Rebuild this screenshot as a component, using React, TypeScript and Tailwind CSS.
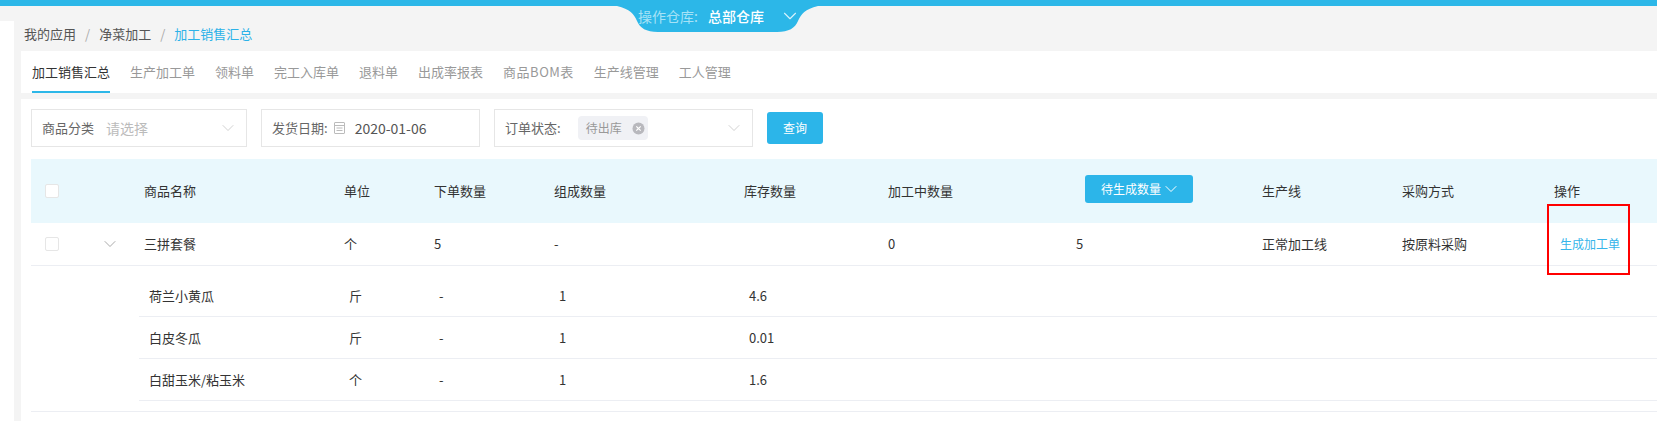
import { ChevronDown } from 'lucide-react';

const tabs = ['生产加工单', '领料单', '完工入库单', '退料单', '出成率报表', '商品BOM表', '生产线管理', '工人管理'];

const rowGrid = 'grid grid-cols-[72px_41px_200px_90px_120px_190px_144px_188px_186px_140px_152px_1fr] items-center';
const subGrid = 'grid grid-cols-[210px_90px_120px_190px_1fr] items-center';

const subRows = [
  { name: '荷兰小黄瓜', unit: '斤', stock: '4.6' },
  { name: '白皮冬瓜', unit: '斤', stock: '0.01' },
  { name: '白甜玉米/粘玉米', unit: '个', stock: '1.6' },
];

const Checkbox = () => (
  <div className="ml-[14px] h-[14px] w-[14px] rounded-[2px] border border-[#e6e6e6] bg-white" />
);

const App = () => {
  return (
    <div className="relative flex h-[421px] w-[1657px] flex-col overflow-hidden bg-[#f4f4f4] font-['Noto_Sans_CJK_SC','Noto_Sans',sans-serif] text-[13px] text-[#333]">
      <div className="h-[6px] bg-[#2cb7e8]" />

      {/* warehouse switcher hangs off the top bar */}
      <div className="absolute left-[617px] top-[6px] h-[26px] w-[201px]">
        <svg className="absolute inset-0" width="201" height="26" viewBox="0 0 201 26">
          <path d="M0 0 H201 C188 3 184 8 181 15 C178 22 172 26 160 26 H41 C29 26 23 22 20 15 C17 8 13 3 0 0 Z" fill="#2cb7e8" />
        </svg>
        <div className="relative flex h-[20px] items-center pl-[21px] text-[14px]">
          <span className="w-[70px] text-[#a6e2f6]">操作仓库:</span>
          <span className="font-medium text-white">总部仓库</span>
          <ChevronDown className="ml-[15px] h-[22px] w-[22px] text-[#d8f3fc]" strokeWidth={1.2} />
        </div>
      </div>

      <div className="flex flex-1">
        <div className="mt-[15px] w-[14px] bg-white" />
        <div className="ml-[7px] flex flex-1 flex-col">
          <div className="flex h-[45px] items-center pl-[3px] pt-[11px] text-[#555]">
            <span>我的应用</span>
            <span className="mx-[9px] text-[#aaa]">/</span>
            <span>净菜加工</span>
            <span className="mx-[9px] text-[#aaa]">/</span>
            <span className="text-[#2cb2e8]">加工销售汇总</span>
          </div>

          <div className="flex h-[42px] gap-5 bg-white pl-[10px]">
            <div className="ml-px flex items-center border-b-2 border-[#2cb7e8] pt-[2px] text-[#333]">加工销售汇总</div>
            {tabs.map((tab) => (
              <div key={tab} className={tab === '商品BOM表' ? 'flex items-center tracking-[0.5px] text-[#999]' : 'flex items-center text-[#999]'}>
                {tab}
              </div>
            ))}
          </div>

          <div className="mt-[6px] flex-1 bg-white pl-[10px] pt-[10px]">
            <div className="flex h-[38px] items-center gap-[14px]">
              <div className="flex h-full w-[216px] items-center border border-[#e6e6e6] pl-[10px]">
                <span className="text-[#666]">商品分类</span>
                <span className="ml-[12px] text-[14px] text-[#bbb]">请选择</span>
                <ChevronDown className="ml-auto mr-[8px] h-[20px] w-[20px] text-[#c8c8c8]" strokeWidth={1} />
              </div>
              <div className="flex h-full w-[219px] items-center border border-[#e6e6e6] pl-[10px]">
                <span className="text-[#666]">发货日期:</span>
                <svg className="ml-[5px]" width="13" height="14" viewBox="0 0 13 14" fill="none" stroke="#bbb">
                  <rect x="1.5" y="1.5" width="10" height="11" rx="0.5" />
                  <path d="M1.5 4.5h10M3.5 7h6M3.5 9.5h6" />
                </svg>
                <span className="ml-[9px] text-[14px] text-[#555]">2020-01-06</span>
              </div>
              <div className="flex h-full w-[259px] items-center border border-[#e6e6e6] pl-[10px]">
                <span className="text-[#666]">订单状态:</span>
                <div className="ml-[17px] flex h-[24px] w-[70px] items-center rounded-[4px] bg-[#f0f1f5] pl-[8px] text-[12px] text-[#999]">
                  待出库
                  <svg className="ml-[10px]" width="13" height="13" viewBox="0 0 13 13">
                    <circle cx="6.5" cy="6.5" r="6" fill="#b8b8bd" />
                    <path d="M4.3 4.3l4.4 4.4M8.7 4.3l-4.4 4.4" stroke="#fff" strokeWidth="1.2" />
                  </svg>
                </div>
                <ChevronDown className="ml-auto mr-[8px] h-[20px] w-[20px] text-[#c8c8c8]" strokeWidth={1} />
              </div>
              <button className="h-[32px] w-[56px] rounded-[3px] bg-[#2cb5e9] text-[12px] text-white">查询</button>
            </div>

            <div className={`${rowGrid} mt-[12px] h-[64px] bg-[#e9f8fd] text-[#333]`}>
              <Checkbox />
              <div />
              <div>商品名称</div>
              <div>单位</div>
              <div>下单数量</div>
              <div>组成数量</div>
              <div>库存数量</div>
              <div>加工中数量</div>
              <div>
                <div className="-mt-[4px] ml-[9px] flex h-[28px] w-[108px] items-center rounded-[3px] bg-[#2cb5e9] pl-[16px] text-[12px] text-white">
                  待生成数量
                  <ChevronDown className="h-[20px] w-[20px]" strokeWidth={1.2} />
                </div>
              </div>
              <div>生产线</div>
              <div>采购方式</div>
              <div>操作</div>
            </div>

            <div className={`${rowGrid} h-[43px] border-b border-[#eceef3]`}>
              <Checkbox />
              <div className="-ml-[3px]">
                <ChevronDown className="h-[20px] w-[20px] text-[#999]" strokeWidth={1} />
              </div>
              <div>三拼套餐</div>
              <div>个</div>
              <div>5</div>
              <div>-</div>
              <div />
              <div>0</div>
              <div>5</div>
              <div>正常加工线</div>
              <div>按原料采购</div>
              <div className="pl-[6px] text-[12px] text-[#36b5ea]">生成加工单</div>
            </div>

            <div className="border-b border-[#eceef3] pb-[10px] pl-[108px] pt-[9px]">
              {subRows.map((row) => (
                <div key={row.name} className={`${subGrid} h-[42px] border-b border-[#eceef3]`}>
                  <div className="pl-[10px]">{row.name}</div>
                  <div>{row.unit}</div>
                  <div>-</div>
                  <div>1</div>
                  <div>{row.stock}</div>
                </div>
              ))}
            </div>
          </div>
        </div>
      </div>

      {/* red annotation box drawn over the table */}
      <div className="absolute left-[1547px] top-[204px] h-[71px] w-[83px] border-[2px] border-[#f00]" />
    </div>
  );
};

export default App;
